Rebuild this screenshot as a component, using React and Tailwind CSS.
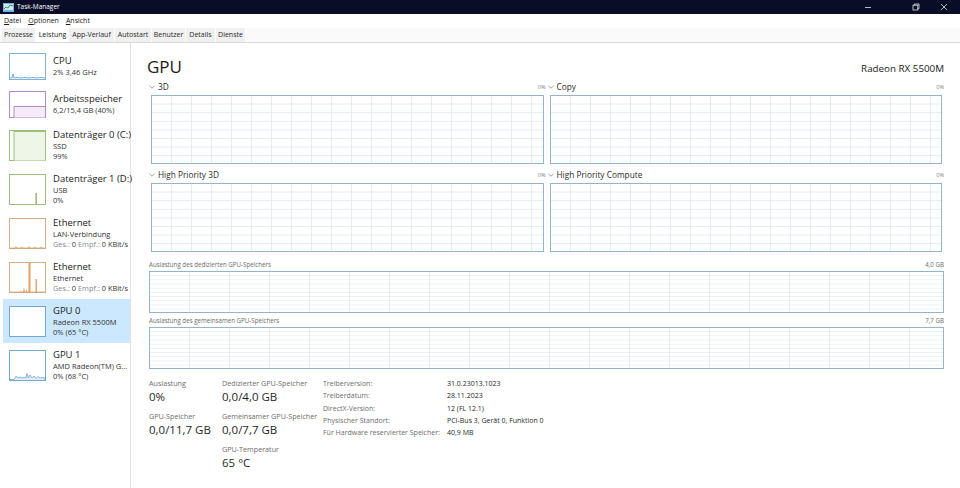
import React from "react";

const tabs = [
  { name: "Prozesse", w: "w-[34px]" },
  { name: "Leistung", w: "w-[33px]", active: true },
  { name: "App-Verlauf", w: "w-[46px]" },
  { name: "Autostart", w: "w-[37px]" },
  { name: "Benutzer", w: "w-[34px]" },
  { name: "Details", w: "w-[30px]" },
  { name: "Dienste", w: "w-[30px]" },
];

const Thumb = ({ kind }) => {
  const tall = kind !== "cpu" && kind !== "mem";
  const h = tall ? 31 : 27;
  const border = {
    cpu: "#7eb3d6",
    mem: "#b58ac9",
    disk0: "#9cc07c",
    disk1: "#9cc07c",
    eth1: "#d6ad86",
    eth2: "#d6ad86",
    gpu0: "#73aad4",
    gpu1: "#73aad4",
  }[kind];
  return (
    <svg width="37" height={h} viewBox={`0 0 37 ${h}`} className="shrink-0">
      <rect x="0.5" y="0.5" width="36" height={h - 1} fill="#fff" stroke={border} />
      {kind === "cpu" && (
        <polyline
          points="1,25 3,25 4,21 5,25 8,24.5 12,25 16,24.5 20,25 24,24.5 28,25 32,24.5 36,25"
          fill="#e6f1f9"
          stroke="#5f9ccb"
          strokeWidth="0.8"
        />
      )}
      {kind === "mem" && (
        <>
          <rect x="5" y="15.5" width="31" height="11" fill="#f5eaf9" />
          <polyline points="5,26.5 5,15.5 36,15.5" fill="none" stroke="#b58ac9" />
        </>
      )}
      {kind === "disk0" && (
        <>
          <rect x="5" y="1.5" width="31" height="29" fill="#eef6e7" />
          <line x1="5" y1="1" x2="5" y2="30.5" stroke="#9cc07c" />
          <line x1="5" y1="1.5" x2="36" y2="1.5" stroke="#9cc07c" />
        </>
      )}
      {kind === "disk1" && <rect x="26.5" y="19" width="1.3" height="11.5" fill="#7fae5a" />}
      {kind === "eth1" && (
        <polyline
          points="1,30 6,30 7,28.5 8,30 12,30 13,28.8 14,30 19,30 20,28.6 21,30 25,30 26,29 27,30 31,30 32,28.8 33,30 36,30"
          fill="#f3dcc6"
          stroke="#d49b66"
          strokeWidth="0.7"
        />
      )}
      {kind === "eth2" && (
        <>
          <polygon points="14,30.5 15,25 16,30.5" fill="#e9a56b" />
          <polygon points="16.5,30.5 17.5,27 18.5,30.5" fill="#e9a56b" />
          <rect x="19.5" y="1" width="2" height="29.5" fill="#e8a066" />
          <rect x="26.5" y="17" width="1.4" height="13.5" fill="#e8a066" />
          <polyline points="1,30 10,30 12,29 13,30 36,30" fill="none" stroke="#d49b66" strokeWidth="0.7" />
        </>
      )}
      {kind === "gpu1" && (
        <polyline
          points="1,29.5 5,29.5 7,26 9,28 11,27 13,28 15,27.5 17,28 18,23.5 19.5,28 21,25 23,28 25,26 27,28.5 29,26.5 31,28 33,27.5 36,28 36,30.5 1,30.5"
          fill="#e3eef8"
          stroke="#5f9ccb"
          strokeWidth="0.7"
        />
      )}
    </svg>
  );
};

const items = [
  { kind: "cpu", title: "CPU", lines: ["2% 3,46 GHz"] },
  { kind: "mem", title: "Arbeitsspeicher", lines: ["6,2/15,4 GB (40%)"] },
  { kind: "disk0", title: "Datenträger 0 (C:)", lines: ["SSD", "99%"] },
  { kind: "disk1", title: "Datenträger 1 (D:)", lines: ["USB", "0%"] },
  { kind: "eth1", title: "Ethernet", lines: ["LAN-Verbindung"], net: true },
  { kind: "eth2", title: "Ethernet", lines: ["Ethernet"], net: true },
  { kind: "gpu0", title: "GPU 0", lines: ["Radeon RX 5500M", "0% (65 °C)"], active: true },
  { kind: "gpu1", title: "GPU 1", lines: ["AMD Radeon(TM) G...", "0% (68 °C)"] },
];

const Chevron = () => (
  <svg width="6" height="4" viewBox="0 0 6 4" className="mr-[3px]">
    <polyline points="0.5,0.8 3,3.2 5.5,0.8" fill="none" stroke="#8a8a8a" strokeWidth="0.8" />
  </svg>
);

const EngineGraph = ({ label }) => (
  <div className="flex flex-col">
    <div className="flex h-[12px] items-center justify-between">
      <div className="flex items-center text-[8.3px] leading-[12px] text-[#2b2b2b]">
        <Chevron />
        {label}
      </div>
      <span className="text-[5.5px] text-[#7a7a7a]">0%</span>
    </div>
    <div className="mx-[2px] mt-[2px] h-[69px] border border-[#93b4c9] bg-[image:linear-gradient(to_right,#e3ecf2_1px,transparent_1px),linear-gradient(to_bottom,#e3ecf2_1px,transparent_1px)] bg-[size:20px_8.6px] bg-[position:-1px_-1px]" />
  </div>
);

const MemGraph = ({ label, max, top }) => (
  <div className={`flex flex-col ${top}`}>
    <div className="flex h-[8px] items-center justify-between text-[6.2px] leading-[8px] text-[#6b6b6b]">
      <span>{label}</span>
      <span>{max}</span>
    </div>
    <div className="mt-[2px] h-[42px] border border-[#93b4c9] bg-[image:linear-gradient(to_right,#e3ecf2_1px,transparent_1px),linear-gradient(to_bottom,#eaf0f4_1px,transparent_1px)] bg-[size:40px_4.2px] bg-[position:-1px_-1px]" />
  </div>
);

const Stat = ({ label, value }) => (
  <div className="flex flex-col">
    <div className="h-[10px] text-[7.2px] leading-[10px] text-[#6d6d6d]">{label}</div>
    <div className="h-[18px] text-[11.5px] leading-[18px] text-[#1f1f1f]">{value}</div>
  </div>
);

const details = [
  ["Treiberversion:", "31.0.23013.1023"],
  ["Treiberdatum:", "28.11.2023"],
  ["DirectX-Version:", "12 (FL 12.1)"],
  ["Physischer Standort:", "PCI-Bus 3, Gerät 0, Funktion 0"],
  ["Für Hardware reservierter Speicher:", "40,9 MB"],
];

export default function App() {
  return (
    <div className="flex h-[488px] w-[960px] flex-col overflow-hidden bg-white font-['Open_Sans',sans-serif] text-[#1a1a1a]">
      {/* title bar */}
      <div className="flex h-[14px] shrink-0 items-center bg-[#0a0d27] text-white">
        <svg width="11" height="9" viewBox="0 0 11 9" className="ml-[3px]">
          <rect x="0" y="0" width="11" height="9" fill="#6fb2e6" />
          <rect x="1" y="1" width="9" height="6" fill="#cfe7f7" />
          <polyline points="1,6 3,4 5,5 7,2 10,3" fill="none" stroke="#2a8a3a" strokeWidth="0.9" />
        </svg>
        <span className="ml-[3px] text-[6.5px] leading-[14px]">Task-Manager</span>
        <div className="ml-auto flex items-center">
          <svg width="8" height="8" viewBox="0 0 8 8" className="mr-[40px]">
            <line x1="1" y1="4.5" x2="7" y2="4.5" stroke="#e6e6e6" strokeWidth="0.8" />
          </svg>
          <svg width="8" height="8" viewBox="0 0 8 8" className="mr-[20px]">
            <rect x="1" y="2.2" width="4.8" height="4.8" fill="none" stroke="#e6e6e6" strokeWidth="0.8" />
            <polyline points="2.3,2.2 2.3,1 7,1 7,5.8 5.8,5.8" fill="none" stroke="#e6e6e6" strokeWidth="0.8" />
          </svg>
          <svg width="8" height="8" viewBox="0 0 8 8" className="mr-[12px]">
            <line x1="1" y1="1" x2="7" y2="7" stroke="#e6e6e6" strokeWidth="0.8" />
            <line x1="7" y1="1" x2="1" y2="7" stroke="#e6e6e6" strokeWidth="0.8" />
          </svg>
        </div>
      </div>

      {/* menu */}
      <div className="flex h-[14px] shrink-0 items-center gap-[7px] pl-[4px] text-[7px] leading-[14px] text-[#1a1a1a]">
        <span><span className="underline">D</span>atei</span>
        <span><span className="underline">O</span>ptionen</span>
        <span><span className="underline">A</span>nsicht</span>
      </div>

      {/* tabs */}
      <div className="flex h-[15px] shrink-0 items-end border-b border-[#d9d9d9] bg-[#fafafa] pl-[2px]">
        {tabs.map((t) => (
          <div
            key={t.name}
            className={`${t.w} flex h-[14px] items-center justify-center text-[7px] leading-[14px] ${
              t.active ? "h-[15px] bg-white text-[#1a1a1a]" : "border-r border-white bg-[#f0f0f0] text-[#2a2a2a]"
            }`}
          >
            {t.name}
          </div>
        ))}
      </div>

      <div className="flex min-h-0 flex-1">
        {/* sidebar */}
        <div className="flex w-[131px] shrink-0 flex-col border-r border-[#e3e3e3] pt-[4px]">
          {items.map((it) => {
            const tall = it.lines.length > 1 || it.net;
            return (
              <div
                key={it.title + it.lines[0]}
                className={`ml-[3px] flex items-center pl-[6px] ${tall ? "h-[44px]" : "h-[38px]"} ${
                  it.active ? "bg-[#cce8ff]" : ""
                }`}
              >
                <Thumb kind={it.kind} />
                <div className="ml-[7px] flex min-w-0 flex-col whitespace-nowrap">
                  <div className="text-[9.5px] leading-[12px] text-[#1a1a1a]">{it.title}</div>
                  {it.lines.map((l) => (
                    <div key={l} className="text-[7.5px] leading-[10.5px] text-[#333]">
                      {l}
                    </div>
                  ))}
                  {it.net && (
                    <div className="text-[7.4px] leading-[10.5px] text-[#333]">
                      <span className="text-[#8a8a8a]">Ges.:</span> 0 <span className="text-[#8a8a8a]">Empf.:</span> 0 KBit/s
                    </div>
                  )}
                </div>
              </div>
            );
          })}
        </div>

        {/* main */}
        <div className="flex min-w-0 flex-1 flex-col pl-[18px] pr-[16px] pt-[6px]">
          <div className="flex h-[30px] items-end justify-between">
            <span className="ml-[-2px] text-[17px] leading-[24px] text-[#1a1a1a]">GPU</span>
            <span className="mb-[3px] text-[9.8px] leading-[14px] text-[#1a1a1a]">Radeon RX 5500M</span>
          </div>

          <div className="mt-[2px] grid grid-cols-2 gap-x-[2px] gap-y-[5px]">
            <EngineGraph label="3D" />
            <EngineGraph label="Copy" />
            <EngineGraph label="High Priority 3D" />
            <EngineGraph label="High Priority Compute" />
          </div>

          <MemGraph top="mt-[9px]" label="Auslastung des dedizierten GPU-Speichers" max="4,0 GB" />
          <MemGraph top="mt-[4px]" label="Auslastung des gemeinsamen GPU-Speichers" max="7,7 GB" />

          <div className="mt-[9px] flex">
            <div className="flex w-[73px] flex-col gap-[5px]">
              <Stat label="Auslastung" value="0%" />
              <Stat label="GPU-Speicher" value="0,0/11,7 GB" />
            </div>
            <div className="flex w-[101px] flex-col gap-[5px]">
              <Stat label="Dedizierter GPU-Speicher" value="0,0/4,0 GB" />
              <Stat label="Gemeinsamer GPU-Speicher" value="0,0/7,7 GB" />
              <Stat label="GPU-Temperatur" value="65 °C" />
            </div>
            <div className="flex flex-col text-[7px] leading-[12.25px]">
              {details.map(([k, v]) => (
                <div key={k} className="flex">
                  <span className="w-[124px] text-[#6d6d6d]">{k}</span>
                  <span className="text-[#1f1f1f]">{v}</span>
                </div>
              ))}
            </div>
          </div>
        </div>
      </div>
    </div>
  );
}
